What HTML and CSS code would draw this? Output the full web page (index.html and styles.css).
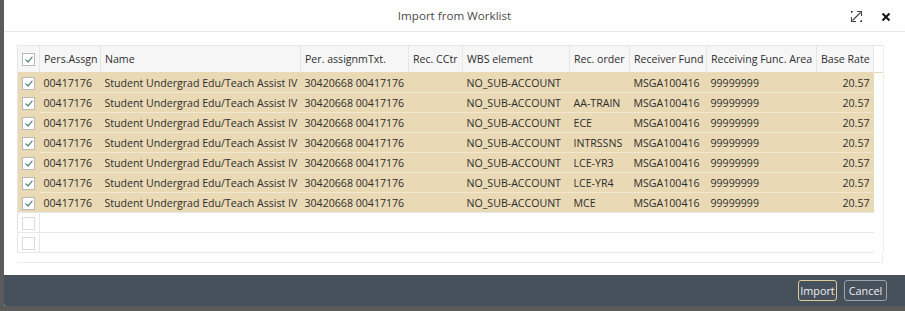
FILE: index.html
```html
<!DOCTYPE html>
<html>
<head>
<meta charset="utf-8">
<link rel="stylesheet" href="styles.css">
</head>
<body>
<div class="dialog">
  <div class="dlg-head">
    <div class="title">Import from Worklist</div>
    <div class="head-icons">
      <svg class="ico-expand" width="13" height="13" viewBox="0 0 13 13">
        <path d="M2.5 10.5 L10.5 2.5 M7 1.5 H11.5 V6 M1.5 7 V11.5 H6 M1 1.5 H3 M1.5 1 V3 M12 11.5 H10 M11.5 12 V10" fill="none" stroke="#444" stroke-width="1.1"/>
      </svg>
      <svg class="ico-close" width="10" height="10" viewBox="0 0 10 10">
        <path d="M1.5 1.5 L8.5 8.5 M8.5 1.5 L1.5 8.5" fill="none" stroke="#111" stroke-width="2"/>
      </svg>
    </div>
  </div>
  <div class="dlg-body">
    <div class="grid-wrap">
      <table class="grid">
        <colgroup>
          <col style="width:22px"><col style="width:61px"><col style="width:200px"><col style="width:108px"><col style="width:54px"><col style="width:107px"><col style="width:60px"><col style="width:77px"><col style="width:110px"><col style="width:57px"><col style="width:10px">
        </colgroup>
        <thead>
          <tr>
            <th class="cb"><span class="box on"></span></th>
            <th>Pers.Assgn</th><th>Name</th><th>Per. assignmTxt.</th><th>Rec. CCtr</th><th>WBS element</th><th>Rec. order</th><th>Receiver Fund</th><th>Receiving Func. Area</th><th>Base Rate</th><th class="sp"></th>
          </tr>
        </thead>
        <tbody>
          <tr class="sel"><td class="cb"><span class="box on"></span></td><td>00417176</td><td>Student Undergrad Edu/Teach Assist IV</td><td>30420668 00417176</td><td></td><td>NO_SUB-ACCOUNT</td><td></td><td>MSGA100416</td><td>99999999</td><td class="num">20.57</td><td class="sp"></td></tr>
          <tr class="sel"><td class="cb"><span class="box on"></span></td><td>00417176</td><td>Student Undergrad Edu/Teach Assist IV</td><td>30420668 00417176</td><td></td><td>NO_SUB-ACCOUNT</td><td>AA-TRAIN</td><td>MSGA100416</td><td>99999999</td><td class="num">20.57</td><td class="sp"></td></tr>
          <tr class="sel"><td class="cb"><span class="box on"></span></td><td>00417176</td><td>Student Undergrad Edu/Teach Assist IV</td><td>30420668 00417176</td><td></td><td>NO_SUB-ACCOUNT</td><td>ECE</td><td>MSGA100416</td><td>99999999</td><td class="num">20.57</td><td class="sp"></td></tr>
          <tr class="sel"><td class="cb"><span class="box on"></span></td><td>00417176</td><td>Student Undergrad Edu/Teach Assist IV</td><td>30420668 00417176</td><td></td><td>NO_SUB-ACCOUNT</td><td>INTRSSNS</td><td>MSGA100416</td><td>99999999</td><td class="num">20.57</td><td class="sp"></td></tr>
          <tr class="sel"><td class="cb"><span class="box on"></span></td><td>00417176</td><td>Student Undergrad Edu/Teach Assist IV</td><td>30420668 00417176</td><td></td><td>NO_SUB-ACCOUNT</td><td>LCE-YR3</td><td>MSGA100416</td><td>99999999</td><td class="num">20.57</td><td class="sp"></td></tr>
          <tr class="sel"><td class="cb"><span class="box on"></span></td><td>00417176</td><td>Student Undergrad Edu/Teach Assist IV</td><td>30420668 00417176</td><td></td><td>NO_SUB-ACCOUNT</td><td>LCE-YR4</td><td>MSGA100416</td><td>99999999</td><td class="num">20.57</td><td class="sp"></td></tr>
          <tr class="sel"><td class="cb"><span class="box on"></span></td><td>00417176</td><td>Student Undergrad Edu/Teach Assist IV</td><td>30420668 00417176</td><td></td><td>NO_SUB-ACCOUNT</td><td>MCE</td><td>MSGA100416</td><td>99999999</td><td class="num">20.57</td><td class="sp"></td></tr>
          <tr class="empty"><td class="cb"><span class="box"></span></td><td colspan="9"></td><td class="sp"></td></tr>
          <tr class="empty"><td class="cb"><span class="box"></span></td><td colspan="9"></td><td class="sp"></td></tr>
        </tbody>
      </table>
      <div class="hscroll"></div>
    </div>
  </div>
  <div class="dlg-foot">
    <button class="btn primary">Import</button>
    <button class="btn cancel">Cancel</button>
  </div>
</div>
</body>
</html>
```
FILE: styles.css
```css
html, body {
  margin: 0;
  padding: 0;
}
body {
  width: 905px;
  height: 311px;
  background: #5b5b5b;
  font-family: "Open Sans", "Liberation Sans", sans-serif;
  overflow: hidden;
}
.dialog {
  margin-left: 4px;
  width: 901px;
  height: 306px;
  background: #fff;
  display: flex;
  flex-direction: column;
  border-bottom-left-radius: 3px;
  overflow: hidden;
}
.dlg-head {
  height: 32px;
  border-bottom: 1px solid #e8e8e8;
  position: relative;
  display: flex;
  align-items: center;
  justify-content: center;
  box-sizing: border-box;
}
.title {
  font-size: 11.6px;
  color: #4a4a4a;
}
.head-icons {
  position: absolute;
  right: 14px;
  top: 10px;
  display: flex;
  align-items: center;
  gap: 18px;
}
.dlg-body {
  flex: 1;
  padding: 13px 0 0 13px;
}
.grid-wrap {
  width: 866px;
}
.grid {
  border-collapse: collapse;
  table-layout: fixed;
  width: 866px;
  font-size: 10.6px;
  color: #2e2e2e;
}
.grid th {
  height: 26px;
  background: #f6f6f6;
  border: 1px solid #e6e6e6;
  border-bottom: none;
  font-weight: normal;
  text-align: left;
  padding: 0 4px;
  white-space: nowrap;
  overflow: hidden;
}
.grid td {
  height: 19px;
  padding: 0 4px;
  white-space: nowrap;
  overflow: hidden;
}
.grid th.cb, .grid td.cb {
  padding: 0;
  text-align: center;
}
.grid th.sp {
  background: #fff;
  border-right: 1px solid #eee;
  border-bottom: none;
}
.grid td.sp {
  background: #fff;
  border: none;
  border-right: 1px solid #eee;
}
.sel td {
  background: #e9d9b4;
  border-top: 1px solid #f1e8cf;
}
.sel:first-child td {
  border-top: 1px solid #e9d9b4;
}
.sel td.cb {
  border-top-color: #e9d9b4;
  border-left: 1px solid #e6e6e6;
}
.sel td.num {
  text-align: right;
}
.empty td {
  background: #fff;
  border-top: 1px solid #e8e8e8;
}
.empty td.cb {
  border-left: 1px solid #e6e6e6;
  border-right: 1px solid #e8e8e8;
}
.empty:last-child td {
  border-bottom: 1px solid #e8e8e8;
}
.empty:last-child td.sp {
  border-bottom: none;
}
.box {
  display: inline-block;
  width: 11px;
  height: 11px;
  border: 1px solid #b9b9b9;
  background: #fff;
  vertical-align: middle;
  position: relative;
}
.empty .box {
  border-color: #dcdcdc;
}
.box.on::after {
  content: "";
  position: absolute;
  left: 3.5px;
  top: 1px;
  width: 3px;
  height: 6px;
  border: solid #2f6a5c;
  border-width: 0 1.5px 1.5px 0;
  transform: rotate(40deg);
}
.hscroll {
  height: 9px;
  border-bottom: 1px solid #ececec;
  border-right: 1px solid #eee;
}
.dlg-foot {
  height: 31px;
  background: #46505b;
  display: flex;
  align-items: center;
  justify-content: flex-end;
  gap: 7px;
  padding-right: 18px;
}
.btn {
  font-family: "Open Sans", "Liberation Sans", sans-serif;
  font-size: 10.8px;
  color: #f0f0f0;
  background: #47515c;
  border: 1px solid #9aa2aa;
  border-radius: 3px;
  height: 21px;
  width: 39px;
  padding: 0;
  line-height: 17px;
  text-align: center;
}
.btn.cancel {
  width: 43px;
}
.btn.primary {
  border-color: #dccb98;
}
```
